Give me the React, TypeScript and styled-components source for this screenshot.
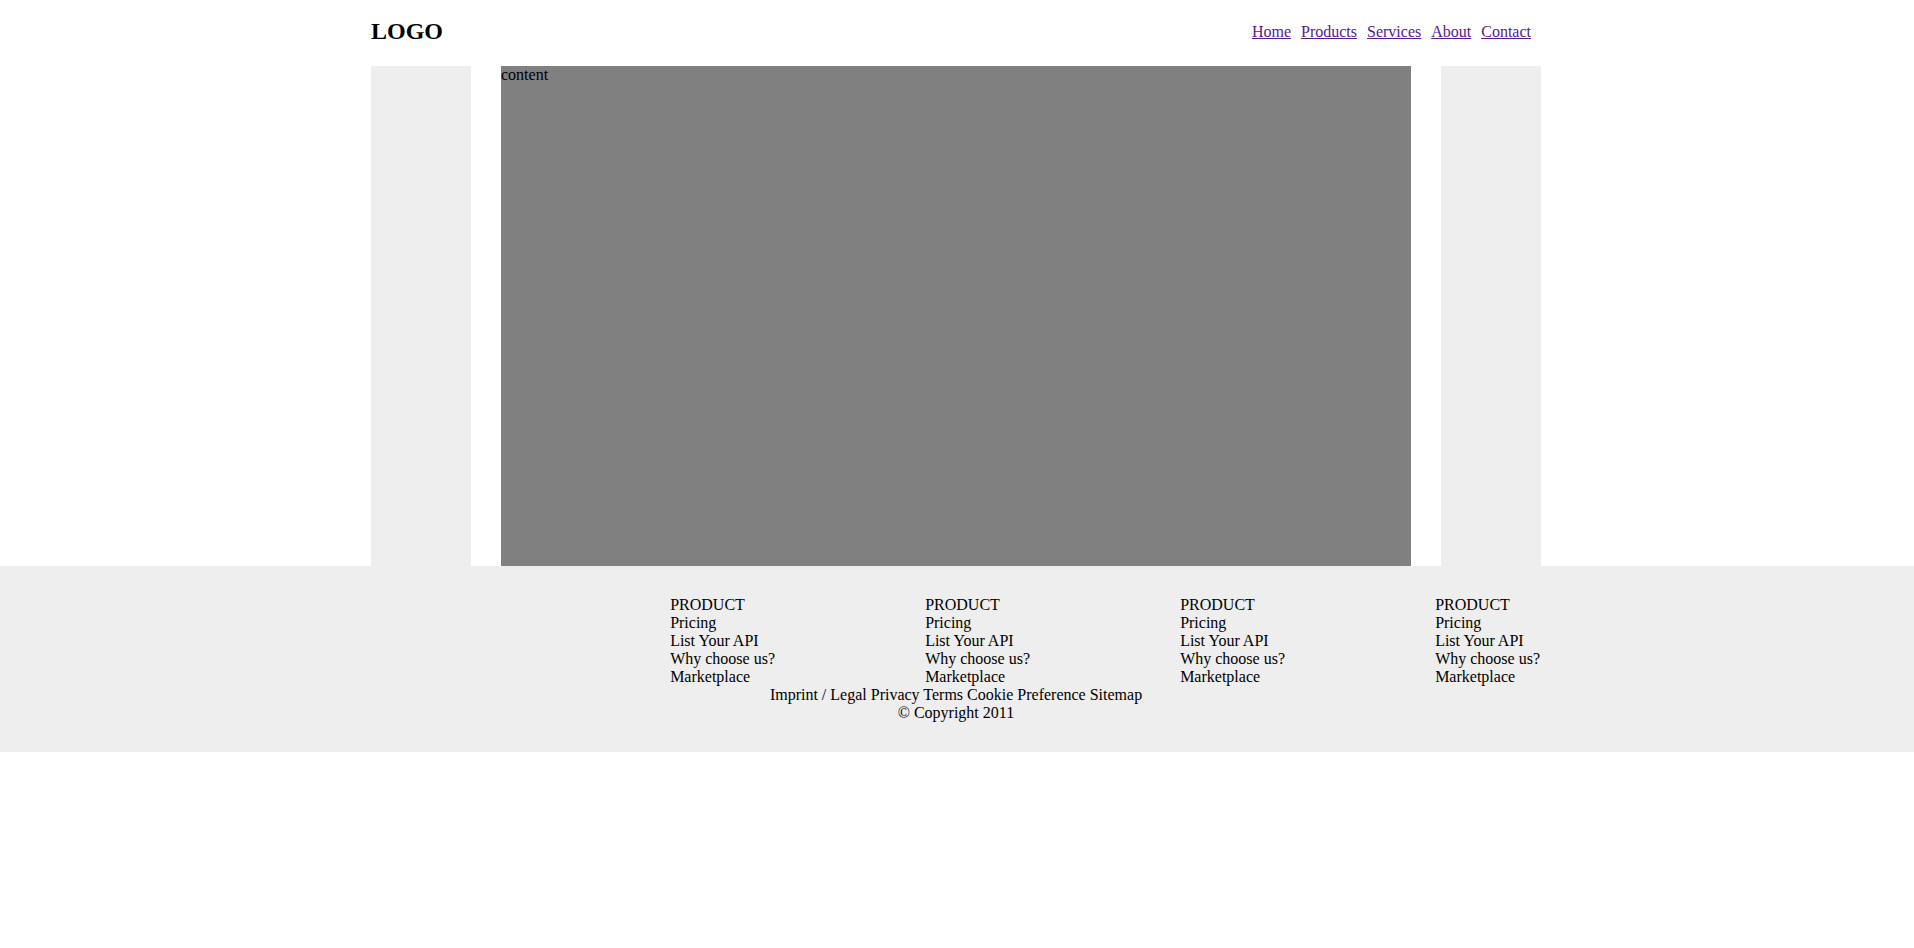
import React from 'react'
import styled, { createGlobalStyle } from 'styled-components'

const GlobalStyle = createGlobalStyle`
  html, body {
    margin: 0;
    padding: 0;
    background: #ffffff;
  }

  body {
    font-family: 'Liberation Serif', 'Times New Roman', serif;
    font-size: 16px;
    color: #000000;
  }
`

const Container = styled.div`
  width: 1170px;
  padding-right: 2px;
  margin: 0 auto;
`

const Header = styled.header`
  height: 66px;
  padding-bottom: 4px;
  box-sizing: border-box;
  display: flex;
  align-items: center;
  justify-content: space-between;
`

const Logo = styled.h2`
  margin: 0;
  font-size: 24px;
  font-weight: bold;
`

const Nav = styled.nav`
  display: flex;
  padding: 2px 10px 0 0;
`

const NavLink = styled.a`
  color: #551a8b;
  text-decoration: underline;
  margin-left: 10px;
`

const Main = styled.main`
  height: 500px;
  display: grid;
  grid-template-columns: 100px 910px 100px;
  column-gap: 30px;
`

const Sidebar = styled.aside`
  background: #eeeeee;
`

const Content = styled.section`
  background: #808080;
`

const Footer = styled.footer`
  background: #eeeeee;
  padding: 30px 2px 30px 0;
`

const Columns = styled.div`
  display: flex;
  justify-content: flex-end;
`

const Column = styled.ul<{ $last?: boolean }>`
  list-style: none;
  margin: 0;
  padding: 0;
  width: ${({ $last }) => ($last ? 'auto' : '255px')};
  flex: none;
`

const BottomLine = styled.div`
  text-align: center;
`

const navItems = ['Home', 'Products', 'Services', 'About', 'Contact']
const footerLinks = ['Pricing', 'List Your API', 'Why choose us?', 'Marketplace']

export default function App() {
  return (
    <>
      <GlobalStyle />
      <Container>
        <Header>
          <Logo>LOGO</Logo>
          <Nav>
            {navItems.map((item) => (
              <NavLink key={item} href="#">
                {item}
              </NavLink>
            ))}
          </Nav>
        </Header>
        <Main>
          <Sidebar />
          <Content>content</Content>
          <Sidebar />
        </Main>
      </Container>
      <Footer>
        <Container>
          <Columns>
            {[0, 1, 2, 3].map((i) => (
              <Column key={i} $last={i === 3}>
                <li>PRODUCT</li>
                {footerLinks.map((link) => (
                  <li key={link}>{link}</li>
                ))}
              </Column>
            ))}
          </Columns>
        </Container>
        <BottomLine>Imprint / Legal Privacy Terms Cookie Preference Sitemap</BottomLine>
        <BottomLine>© Copyright 2011</BottomLine>
      </Footer>
    </>
  )
}
